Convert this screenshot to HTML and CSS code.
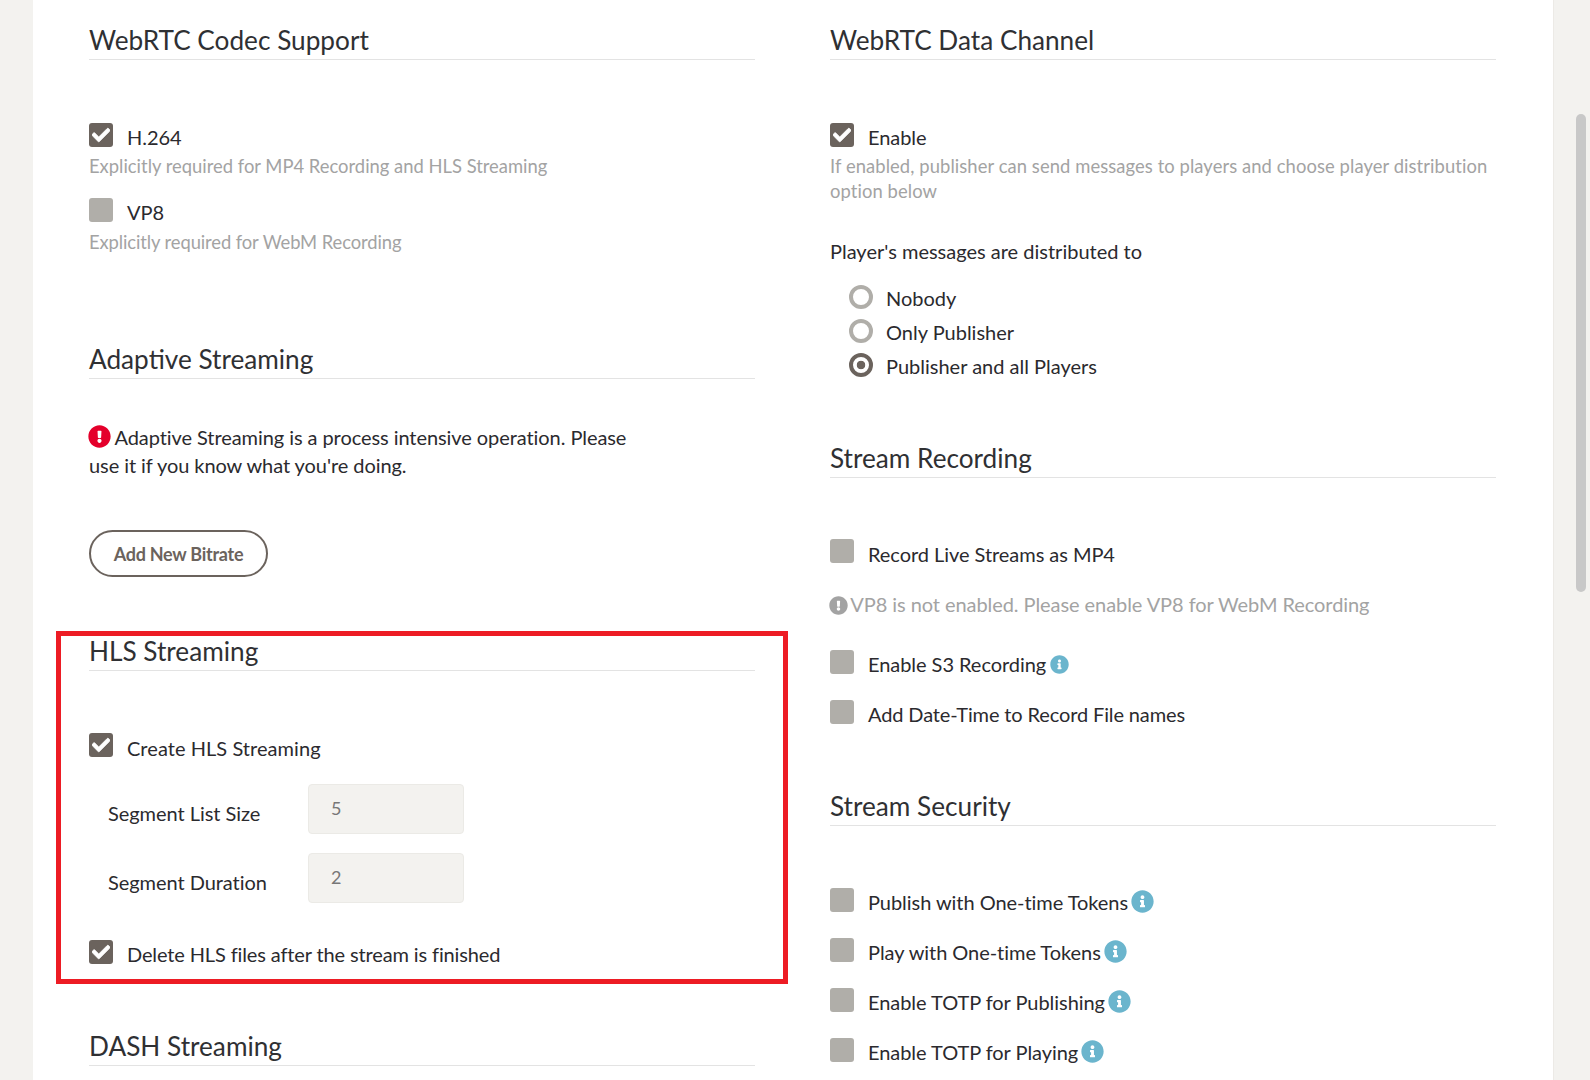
FILE: index.html
```html
<!DOCTYPE html>
<html lang="en">
<head>
<meta charset="utf-8">
<title>Application Settings</title>
<link rel="stylesheet" href="styles.css">
</head>
<body>
<svg class="defs" width="0" height="0" aria-hidden="true">
  <symbol id="i-check" viewBox="0 0 512 512"><path d="M173.898 439.404l-166.4-166.4c-9.997-9.997-9.997-26.206 0-36.204l36.203-36.204c9.997-9.998 26.207-9.998 36.204 0L192 312.69 432.095 72.596c9.997-9.997 26.207-9.997 36.204 0l36.203 36.204c9.997 9.997 9.997 26.206 0 36.204l-294.4 294.401c-9.998 9.997-26.207 9.997-36.204-.001z"/></symbol>
  <symbol id="i-alert" viewBox="0 0 512 512"><path d="M504 256c0 136.997-111.043 248-248 248S8 392.997 8 256C8 119.083 119.043 8 256 8s248 111.083 248 248zm-248 50c-25.405 0-46 20.595-46 46s20.595 46 46 46 46-20.595 46-46-20.595-46-46-46zm-43.673-165.346l7.418 136c.347 6.364 5.609 11.346 11.982 11.346h48.546c6.373 0 11.635-4.982 11.982-11.346l7.418-136c.375-6.874-5.098-12.654-11.982-12.654h-63.383c-6.884 0-12.356 5.78-11.981 12.654z"/></symbol>
  <symbol id="i-info" viewBox="0 0 512 512"><path d="M256 8C119.043 8 8 119.083 8 256c0 136.997 111.043 248 248 248s248-111.003 248-248C504 119.083 392.957 8 256 8zm0 110c23.196 0 42 18.804 42 42s-18.804 42-42 42-42-18.804-42-42 18.804-42 42-42zm56 254c0 6.627-5.373 12-12 12h-88c-6.627 0-12-5.373-12-12v-24c0-6.627 5.373-12 12-12h12v-64h-12c-6.627 0-12-5.373-12-12v-24c0-6.627 5.373-12 12-12h64c6.627 0 12 5.373 12 12v100h12c6.627 0 12 5.373 12 12v24z"/></symbol>
</svg>
<main class="card">
  <div class="col">
    <section class="sec">
      <h2>WebRTC Codec Support</h2>
      <div class="check first"><span class="box on"><svg><use href="#i-check"/></svg></span><span class="lbl">H.264</span></div>
      <p class="desc">Explicitly required for MP4 Recording and HLS Streaming</p>
      <div class="check next"><span class="box"></span><span class="lbl">VP8</span></div>
      <p class="desc short">Explicitly required for WebM Recording</p>
    </section>
    <section class="sec adaptive">
      <h2>Adaptive Streaming</h2>
      <p class="warn"><svg class="ic-red"><use href="#i-alert"/></svg> Adaptive Streaming is a process intensive operation. Please use it if you know what you're doing.</p>
      <button class="btn" type="button">Add New Bitrate</button>
    </section>
    <section class="sec hls">
      <h2>HLS Streaming</h2>
      <div class="check first"><span class="box on"><svg><use href="#i-check"/></svg></span><span class="lbl wide">Create HLS Streaming</span></div>
      <div class="field-row r1"><label class="fl">Segment List Size</label><input class="inp" value="5" readonly></div>
      <div class="field-row r2"><label class="fl">Segment Duration</label><input class="inp" value="2" readonly></div>
      <div class="check del"><span class="box on"><svg><use href="#i-check"/></svg></span><span class="lbl tight">Delete HLS files after the stream is finished</span></div>
    </section>
    <section class="sec dash">
      <h2>DASH Streaming</h2>
    </section>
  </div>
  <div class="col">
    <section class="sec">
      <h2>WebRTC Data Channel</h2>
      <div class="check first"><span class="box on"><svg><use href="#i-check"/></svg></span><span class="lbl">Enable</span></div>
      <p class="desc long">If enabled, publisher can send messages to players and choose player distribution option below</p>
      <p class="dist">Player's messages are distributed to</p>
      <div class="radios">
        <div class="radio"><span class="dot"></span><span>Nobody</span></div>
        <div class="radio"><span class="dot"></span><span>Only Publisher</span></div>
        <div class="radio"><span class="dot sel"></span><span>Publisher and all Players</span></div>
      </div>
    </section>
    <section class="sec rec">
      <h2>Stream Recording</h2>
      <div class="check rec1"><span class="box"></span><span class="lbl">Record Live Streams as MP4</span></div>
      <p class="note"><svg class="ic-grey"><use href="#i-alert"/></svg> VP8 is not enabled. Please enable VP8 for WebM Recording</p>
      <div class="check rec2"><span class="box"></span><span class="lbl">Enable S3 Recording <svg class="ic-info sm"><use href="#i-info"/></svg></span></div>
      <div class="check rec3"><span class="box"></span><span class="lbl tight">Add Date-Time to Record File names</span></div>
    </section>
    <section class="sec secu">
      <h2>Stream Security</h2>
      <div class="check sec1"><span class="box"></span><span class="lbl">Publish with One-time Tokens <svg class="ic-info"><use href="#i-info"/></svg></span></div>
      <div class="check tok"><span class="box"></span><span class="lbl">Play with One-time Tokens <svg class="ic-info"><use href="#i-info"/></svg></span></div>
      <div class="check tok"><span class="box"></span><span class="lbl">Enable TOTP for Publishing <svg class="ic-info"><use href="#i-info"/></svg></span></div>
      <div class="check tok"><span class="box"></span><span class="lbl">Enable TOTP for Playing <svg class="ic-info"><use href="#i-info"/></svg></span></div>
    </section>
  </div>
</main>
<div class="thumb"></div>
</body>
</html>
```
FILE: styles.css
```css
html, body { margin: 0; height: 1080px; overflow: hidden; }
body { background: #f3f2ef; font-family: Lato, sans-serif; color: #2b2a2e; font-size: 20px; }
.defs { position: absolute; }
.card { box-sizing: border-box; width: 1520px; height: 1080px; margin-left: 33px; padding: 24px 57px 0 56px; background: #fff; display: grid; grid-template-columns: 666px 666px; column-gap: 75px; overflow: hidden; box-shadow: 1px 0 0 #eceae6; }
h2 { margin: 0; height: 35px; line-height: 32px; font-size: 26.2px; font-weight: 400; color: #2f3033; border-bottom: 1px solid #e3e3e3; }
p { margin: 0; }
.check { display: flex; align-items: flex-start; gap: 14px; }
.box { width: 24px; height: 24px; border-radius: 3px; background: #b0aea9; flex: none; display: flex; align-items: center; justify-content: center; }
.box.on { background: #6b635d; }
.box svg { width: 18px; height: 18px; fill: #fff; stroke: #fff; stroke-width: 24px; }
.lbl { margin-top: 1px; line-height: 26px; height: 26px; letter-spacing: -.05px; }
.wide { letter-spacing: .05px; margin-top: 2px; height: 25px; }
.tight { letter-spacing: -.13px; }
.first { margin-top: 63px; }
.next { margin-top: 19px; }
.desc { margin-top: 4px; color: #a3a3a3; font-size: 18.4px; line-height: 25px; }
.long { letter-spacing: .08px; }
.short { margin-top: 5px; letter-spacing: -.1px; }
.adaptive { margin-top: 88px; }
.warn { width: 545px; margin-top: 44px; line-height: 28px; letter-spacing: -.07px; }
.ic-red { width: 23px; height: 23px; fill: #e4002b; vertical-align: -3px; margin-left: -1px; margin-right: -1px; }
.btn { display: block; box-sizing: border-box; width: 179px; height: 47px; margin-top: 51px; border: 2px solid #6b635d; border-radius: 24px; background: #fff; color: #6b635d; font: 700 18px Lato, sans-serif; padding: 0; letter-spacing: -.25px; }
.hls { margin: 54px -33px 0; padding: 0 28px; border: 5px solid #ed1c24; height: 343px; }
.hls h2 { margin-top: -1px; }
.hls .first { margin-top: 62px; }
.field-row { display: flex; align-items: flex-start; padding-left: 19px; }
.fl { width: 200px; flex: none; line-height: 26px; letter-spacing: -.05px; }
.r1 { margin-top: 24px; }
.r2 { margin-top: 19px; }
.r1 .fl, .r2 .fl { margin-top: 16px; }
.inp { box-sizing: border-box; width: 156px; height: 50px; border: 1px solid #ebeae6; border-radius: 4px; background: #f3f2ef; color: #777; font: 18px Lato, sans-serif; padding: 0 22px 2px; outline: none; }
.del { margin-top: 37px; }
.dash { margin-top: 46px; }
.dist { margin-top: 33px; line-height: 28px; }
.radios { margin-top: 20px; padding-left: 19px; }
.radio { display: flex; align-items: flex-start; gap: 13px; height: 34px; line-height: 26px; }
.dot { box-sizing: border-box; width: 24px; height: 24px; border-radius: 50%; border: 4px solid #b0aea9; background: #fff; flex: none; }
.dot.sel { border: 4px solid #6b635d; background: radial-gradient(circle, #6b635d 0 4px, #fff 4.6px); }
.rec { margin-top: 55px; }
.rec1 { margin-top: 61px; }
.rec1 .lbl { margin-top: 2px; height: 25px; }
.note { margin-top: 24px; color: #a3a3a3; line-height: 28px; letter-spacing: -.07px; }
.ic-grey { width: 19px; height: 19px; fill: #a3a3a3; vertical-align: -3px; margin-left: -1px; margin-right: -2px; }
.rec2 { margin-top: 32px; }
.rec3 { margin-top: 23px; }
.secu { margin-top: 63px; }
.sec1 { margin-top: 62px; }
.tok { margin-top: 23px; }
.ic-info { width: 23px; height: 23px; fill: #6bb5cd; vertical-align: -3px; margin-left: -2px; }
.ic-info.sm { width: 19px; height: 19px; vertical-align: -2px; margin-left: -1px; }
.thumb { position: absolute; left: 1576px; top: 114px; width: 10px; height: 478px; border-radius: 5px; background: #c8c8c8; }
```
